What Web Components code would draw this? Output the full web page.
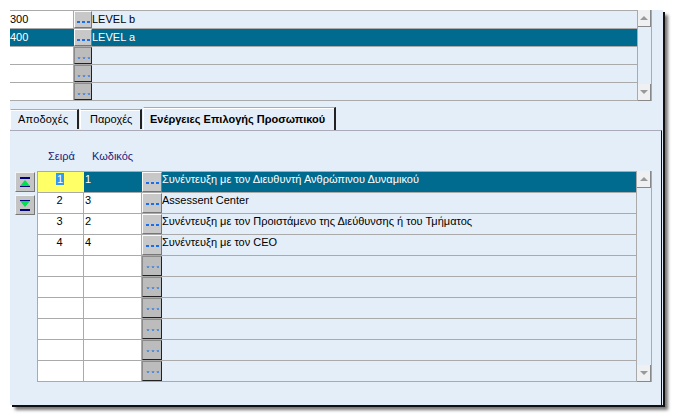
<!DOCTYPE html>
<html>
<head>
<meta charset="utf-8">
<style>
  html, body { margin: 0; background: #fff; }
  body { box-sizing: border-box; min-height: 417px; padding: 10px 0 0 10px; font: 11px "Liberation Sans", Arial, sans-serif; }
</style>
</head>
<body>
<erp-window>
  <erp-grid style="--cols: 64px 18px 1fr; --row-h: 18px; --bar-w: 15px; --grid-w: 642px; --lh: 16px">
    <erp-row a="300" c="LEVEL b" ready></erp-row>
    <erp-row a="400" c="LEVEL a" ready selected></erp-row>
    <erp-row></erp-row>
    <erp-row></erp-row>
    <erp-row></erp-row>
  </erp-grid>
  <erp-tabs>
    <erp-tab style="width: 69px; padding-left: 7px; letter-spacing: .2px">Αποδοχές</erp-tab>
    <erp-tab style="width: 62px; padding-left: 9px">Παροχές</erp-tab>
    <erp-tab active style="width: 193px; padding-left: 6px">Ενέργειες Επιλογής Προσωπικού</erp-tab>
  </erp-tabs>
  <erp-page>
    <erp-grid-head></erp-grid-head>
    <div style="display:flex">
      <erp-move></erp-move>
      <erp-grid style="--cols: 46px 58px 20px 1fr; --row-h: 21px; --bar-w: 16px; --grid-w: 614px; --lh: 15px; --edge: #aaa">
        <erp-row a="1" b="1" c="Συνέντευξη με τον Διευθυντή Ανθρώπινου Δυναμικού" ready selected current></erp-row>
        <erp-row a="2" b="3" c="Assessent Center" ready></erp-row>
        <erp-row a="3" b="2" c="Συνέντευξη με τον Προιστάμενο της Διεύθυνσης ή του Τμήματος" ready></erp-row>
        <erp-row a="4" b="4" c="Συνέντευξη με τον CEO" ready></erp-row>
        <erp-row></erp-row><erp-row></erp-row><erp-row></erp-row>
        <erp-row></erp-row><erp-row></erp-row><erp-row></erp-row>
      </erp-grid>
    </div>
  </erp-page>
</erp-window>

<script>
class ErpWindow extends HTMLElement {
  connectedCallback() {
    this.attachShadow({ mode: 'open' });
    this.shadowRoot.innerHTML = `
      <style>
        :host {
          display: block;
          width: 653px;
          height: 395px;
          background: #e4eef8;
          box-shadow: 2px 2px 0 #111, 5px 5px 3px #777;
          color: #000;
        }
      </style>
      <slot></slot>
    `;
  }
}

class ErpGrid extends HTMLElement {
  connectedCallback() {
    this.attachShadow({ mode: 'open' });
    this.shadowRoot.innerHTML = `
      <style>
        :host { display: flex; width: var(--grid-w); flex: none; }
        .rows { flex: 1; min-width: 0; padding-top: 1px; box-shadow: inset 0 1px 0 #aaa, -1px 0 0 var(--edge, transparent); }
        .bar {
          width: var(--bar-w);
          flex: none;
          box-sizing: border-box;
          border-right: 1px solid #aaa;
          border-left: 1px solid #aaa;
          display: flex;
          flex-direction: column;
          justify-content: space-between;
        }
        .btn {
          height: 16px;
          background: #eef0f2;
          border-bottom: 1px solid #888;
          border-right: 1px solid #888;
          display: flex;
          align-items: center;
          justify-content: center;
        }
        .btn i { width: 0; height: 0; border: 4px solid transparent; border-top: 0; border-bottom: 4px solid #999; }
        .btn.down i { transform: rotate(180deg); }
      </style>
      <div class="rows"><slot></slot></div>
      <div class="bar">
        <div class="btn"><i></i></div>
        <div class="btn down"><i></i></div>
      </div>
    `;
  }
}

class ErpRow extends HTMLElement {
  connectedCallback() {
    const a = this.getAttribute('a') || '';
    const b = this.getAttribute('b');
    const c = this.getAttribute('c') || '';
    const hasB = this.closest('erp-page') !== null;
    const ready = this.hasAttribute('ready');
    const selected = this.hasAttribute('selected');
    const current = this.hasAttribute('current');
    this.attachShadow({ mode: 'open' });
    this.shadowRoot.innerHTML = `
      <style>
        :host { display: block; }
        .row {
          display: grid;
          grid-template-columns: var(--cols);
          height: var(--row-h);
          box-sizing: border-box;
          border-bottom: 1px solid #aaa;
          line-height: var(--lh);
        }
        .cell { white-space: nowrap; overflow: hidden; }
        .pad { padding-left: 1px; }
        .white { background: #fff; border-right: 1px solid #aaa; }
        .num { text-align: center; padding-right: 2px; }
        .sel { background: #006a8f; color: #fff; border-right: 0; }
        .cur { background: #ffff66; border-right: 0; }
        .cur span { background: #3399ee; color: #fff; padding: 0 1px; }
      </style>
      <div class="row">
        <div class="cell white ${hasB ? 'num' : ''} ${selected && !hasB ? 'sel' : ''} ${current ? 'cur' : ''}"><span>${a}</span></div>
        ${hasB ? `<div class="cell pad white ${selected ? 'sel' : ''}">${b || ''}</div>` : ''}
        <erp-dots ${ready ? 'ready' : ''}></erp-dots>
        <div class="cell ${selected ? 'sel' : ''}">${c}</div>
      </div>
    `;
  }
}

class ErpDots extends HTMLElement {
  connectedCallback() {
    const on = this.hasAttribute('ready');
    const mark = on
      ? '<path d="M0 0h3v2H0zM5 0h3v2H5zM10 0h3v2h-3z" fill="#1a6ef0"/>'
      : '<path d="M1 0l1 2 1-2M6 0l1 2 1-2M11 0l1 2 1-2" fill="none" stroke="#3d82e0" stroke-width="1"/>';
    this.attachShadow({ mode: 'open' });
    this.shadowRoot.innerHTML = `
      <style>
        :host { display: block; min-width: 0; }
        .b {
          height: 100%;
          box-sizing: border-box;
          background: ${on ? '#c8c8c8' : '#bcbcbc'};
          border: 1px solid;
          border-color: ${on ? '#fafafa #777 #777 #fafafa' : '#8a8a8a #222 #222 #8a8a8a'};
          display: flex;
          justify-content: center;
          padding-top: 9px;
        }
        svg { display: block; }
      </style>
      <div class="b"><svg width="13" height="2" viewBox="0 0 13 2">${mark}</svg></div>
    `;
  }
}

class ErpTabs extends HTMLElement {
  connectedCallback() {
    this.attachShadow({ mode: 'open' });
    this.shadowRoot.innerHTML = `
      <style>
        :host {
          display: flex;
          align-items: flex-end;
          gap: 1px;
          height: 29px;
          box-sizing: border-box;
        }
      </style>
      <slot></slot>
    `;
  }
}

class ErpTab extends HTMLElement {
  connectedCallback() {
    const active = this.hasAttribute('active');
    this.attachShadow({ mode: 'open' });
    this.shadowRoot.innerHTML = `
      <style>
        :host {
          display: block;
          flex: none;
          box-sizing: border-box;
          height: ${active ? 23 : 20}px;
          margin-bottom: ${active ? 0 : 1}px;
          line-height: ${active ? 22 : 19}px;
          border-top: 1px solid #aaa;
          border-left: 1px solid #fff;
          border-right: 2px solid #222;
          box-shadow: inset 0 1px 0 #fff;
          font-weight: ${active ? 600 : 400};
          white-space: nowrap;
        }
      </style>
      <slot></slot>
    `;
  }
}

class ErpPage extends HTMLElement {
  connectedCallback() {
    this.attachShadow({ mode: 'open' });
    this.shadowRoot.innerHTML = `
      <style>
        :host {
          display: block;
          box-sizing: border-box;
          width: 652px;
          height: 275px;
          border-top: 1px solid #aab;
          border-right: 1px solid #111;
          padding-left: 5px;
        }
      </style>
      <slot></slot>
    `;
  }
}

class ErpGridHead extends HTMLElement {
  connectedCallback() {
    this.attachShadow({ mode: 'open' });
    this.shadowRoot.innerHTML = `
      <style>
        :host { display: flex; height: 40px; color: #1a1a80; padding: 19px 0 0 33px; box-sizing: border-box; }
        span:first-of-type { width: 44px; }
      </style>
      <span>Σειρά</span><span>Κωδικός</span>
    `;
  }
}

class ErpMove extends HTMLElement {
  connectedCallback() {
    this.attachShadow({ mode: 'open' });
    const icon = up => `<svg width="10" height="11" viewBox="0 0 10 11">
      ${up
        ? '<rect y="0" width="10" height="2" fill="#00007f"/><path d="M5 3 L10 9 H0Z" fill="#00e050"/><rect y="9" width="10" height="1" fill="#00007f"/>'
        : '<rect y="0" width="10" height="1" fill="#00007f"/><path d="M0 1 H10 L5 7Z" fill="#00e050"/><rect y="9" width="10" height="2" fill="#00007f"/>'}
    </svg>`;
    this.shadowRoot.innerHTML = `
      <style>
        :host { display: flex; flex-direction: column; gap: 3px; width: 23px; flex: none; padding-top: 1px; box-sizing: border-box; }
        button {
          width: 20px; height: 20px; padding: 0; box-sizing: border-box;
          background: #c4c4c4;
          border: 1px solid; border-color: #f4f4f4 #777 #777 #f4f4f4;
          display: flex; align-items: center; justify-content: center;
        }
      </style>
      <button>${icon(true)}</button>
      <button>${icon(false)}</button>
    `;
  }
}

customElements.define('erp-window', ErpWindow);
customElements.define('erp-grid', ErpGrid);
customElements.define('erp-row', ErpRow);
customElements.define('erp-dots', ErpDots);
customElements.define('erp-tabs', ErpTabs);
customElements.define('erp-tab', ErpTab);
customElements.define('erp-page', ErpPage);
customElements.define('erp-grid-head', ErpGridHead);
customElements.define('erp-move', ErpMove);
</script>
</body>
</html>
